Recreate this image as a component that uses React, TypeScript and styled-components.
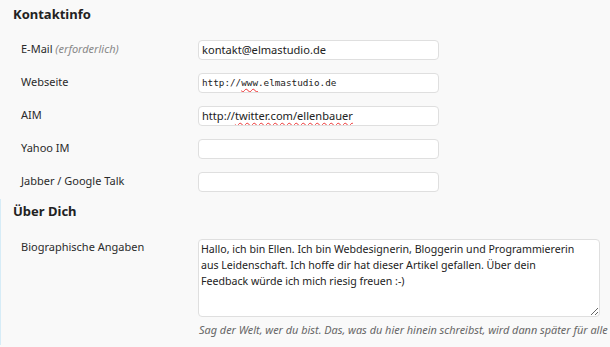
import React from 'react';
import styled, { createGlobalStyle } from 'styled-components';

const GlobalStyle = createGlobalStyle`
  html, body {
    margin: 0;
    padding: 0;
    background: #f9f9f9;
  }
  body {
    font-family: "Noto Sans", "DejaVu Sans", sans-serif;
    color: #333;
  }
`;

const Page = styled.div`
  width: 610px;
  height: 347px;
  overflow: hidden;
  background: #f9f9f9;
`;

const Section = styled.section<{ $accent?: boolean }>`
  padding-left: ${({ $accent }) => ($accent ? '12px' : '13px')};
  border-left: ${({ $accent }) => ($accent ? '1px solid #d6ecf7' : 'none')};
`;

const Heading = styled.h3<{ $top: number; $bottom: number }>`
  margin: 0;
  padding: ${({ $top, $bottom }) => `${$top}px 0 ${$bottom}px`};
  font-size: 13px;
  line-height: 16px;
  font-weight: 700;
  color: #222;
`;

const Row = styled.div`
  display: grid;
  grid-template-columns: 185px 1fr;
  padding: 6px 0 7px;
`;

const Label = styled.label`
  padding: 1px 0 0 8px;
  font-size: 11px;
  line-height: 16px;
  color: #2b2b2b;
`;

const Hint = styled.span`
  font-style: italic;
  color: #888;
`;

const Field = styled.div<{ $mono?: boolean }>`
  box-sizing: border-box;
  width: 241px;
  height: 20px;
  padding: 0 3px;
  background: #fff;
  border: 1px solid #dfdfdf;
  border-radius: 4px;
  font-family: ${({ $mono }) =>
    $mono ? '"DejaVu Sans Mono", "Liberation Mono", monospace' : '"Noto Sans", "DejaVu Sans", sans-serif'};
  font-size: ${({ $mono }) => ($mono ? '9.3px' : '11.1px')};
  line-height: 18px;
  color: #222;
  white-space: nowrap;
  overflow: hidden;
`;

const Misspelled = styled.span`
  text-decoration: underline wavy #e33;
  text-decoration-thickness: 1px;
  text-underline-offset: 2px;
`;

const Bio = styled.div`
  display: flex;
  flex-direction: column;
`;

const TextArea = styled.textarea`
  box-sizing: border-box;
  width: 402px;
  height: 78px;
  margin: 1px 0 0;
  padding: 1px 2px;
  background: #fff;
  border: 1px solid #dfdfdf;
  border-radius: 4px;
  font-family: "Noto Sans", "DejaVu Sans", sans-serif;
  font-size: 10.6px;
  line-height: 16px;
  color: #222;
  white-space: pre;
  overflow: hidden;
  outline: none;
`;

const Description = styled.p`
  margin: 5px 0 0 1px;
  font-size: 10.9px;
  line-height: 16px;
  font-style: italic;
  color: #666;
  white-space: nowrap;
`;

const bioText =
  'Hallo, ich bin Ellen. Ich bin Webdesignerin, Bloggerin und Programmiererin\n' +
  'aus Leidenschaft. Ich hoffe dir hat dieser Artikel gefallen. Über dein\n' +
  'Feedback würde ich mich riesig freuen :-)';

export default function App() {
  return (
    <Page>
      <GlobalStyle />
      <Section>
        <Heading $top={6} $bottom={12}>Kontaktinfo</Heading>
        <Row>
          <Label>
            E-Mail <Hint>(erforderlich)</Hint>
          </Label>
          <Field>kontakt@elmastudio.de</Field>
        </Row>
        <Row>
          <Label>Webseite</Label>
          <Field $mono>
            http://<Misspelled>www</Misspelled>.elmastudio.de
          </Field>
        </Row>
        <Row>
          <Label>AIM</Label>
          <Field>
            http://<Misspelled>twitter.com/ellenbauer</Misspelled>
          </Field>
        </Row>
        <Row>
          <Label>Yahoo IM</Label>
          <Field />
        </Row>
        <Row>
          <Label>Jabber / Google Talk</Label>
          <Field />
        </Row>
      </Section>
      <Section $accent>
        <Heading $top={4} $bottom={13}>Über Dich</Heading>
        <Row>
          <Label>Biographische Angaben</Label>
          <Bio>
            <TextArea defaultValue={bioText} spellCheck={false} />
            <Description>
              Sag der Welt, wer du bist. Das, was du hier hinein schreibst, wird dann später für alle
            </Description>
          </Bio>
        </Row>
      </Section>
    </Page>
  );
}
